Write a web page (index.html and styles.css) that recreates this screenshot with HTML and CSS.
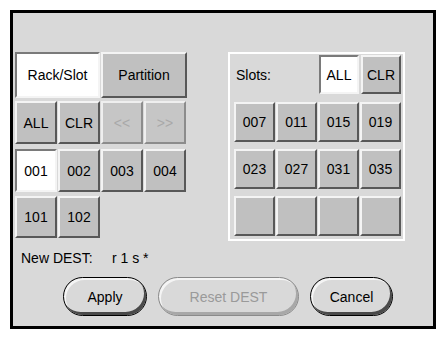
FILE: index.html
```html
<!DOCTYPE html>
<html lang="en">
<head>
	<meta charset="UTF-8">
	<title>Destination</title>
	<link rel="stylesheet" href="styles.css">
</head>
<body>
	<div class="frame">
		<div class="top">
			<div class="left">
				<div class="row row-tabs">
					<div class="btn on tab-rack">Rack/Slot</div>
					<div class="btn tab-part">Partition</div>
				</div>
				<div class="row row-ctl">
					<div class="btn sq">ALL</div>
					<div class="btn sq">CLR</div>
					<div class="btn sq off">&lt;&lt;</div>
					<div class="btn sq off">&gt;&gt;</div>
				</div>
				<div class="row row-rack">
					<div class="btn sq on">001</div>
					<div class="btn sq">002</div>
					<div class="btn sq">003</div>
					<div class="btn sq">004</div>
				</div>
				<div class="row row-rack2">
					<div class="btn sq">101</div>
					<div class="btn sq">102</div>
				</div>
			</div>

			<div class="slots">
				<div class="slots-head">
					<span class="slots-label">Slots:</span>
					<div class="btn small on">ALL</div>
					<div class="btn small">CLR</div>
				</div>
				<div class="slot-grid">
					<div class="btn slot">007</div>
					<div class="btn slot">011</div>
					<div class="btn slot">015</div>
					<div class="btn slot">019</div>
					<div class="btn slot">023</div>
					<div class="btn slot">027</div>
					<div class="btn slot">031</div>
					<div class="btn slot">035</div>
					<div class="btn slot"></div>
					<div class="btn slot"></div>
					<div class="btn slot"></div>
					<div class="btn slot"></div>
				</div>
			</div>
		</div>

		<div class="dest">
			<span class="dest-label">New DEST:</span>
			<span class="dest-value">r 1 s *</span>
		</div>

		<div class="actions">
			<div class="pill pill-apply">Apply</div>
			<div class="pill pill-reset disabled">Reset DEST</div>
			<div class="pill pill-cancel">Cancel</div>
		</div>
	</div>
</body>
</html>
```

FILE: styles.css
```css
* {
	margin: 0;
	padding: 0;
	box-sizing: border-box;
}

body {
	font-family: "Liberation Sans", Arial, sans-serif;
	font-size: 14px;
	line-height: 16px;
	color: #000;
	background: #fff;
}

.frame {
	margin: 10px;
	width: 426px;
	height: 319px;
	border: 3px solid #000;
	background: #d9d9d9;
}

.top {
	display: flex;
	align-items: flex-start;
	padding: 39px 0 0 2px;
}

/* left column */
.left {
	width: 172px;
}

.row {
	display: flex;
	gap: 1px;
}

.row-tabs {
	height: 46px;
}

.row-ctl {
	margin-top: 3px;
	height: 43px;
}

.row-rack {
	margin-top: 5px;
	height: 43px;
}

.row-rack2 {
	margin-top: 4px;
	height: 42px;
}

.btn {
	display: flex;
	align-items: center;
	justify-content: center;
	background: #c0c0c0;
	border: 2px solid;
	border-color: #f4f4f4 #585858 #585858 #f4f4f4;
}

.btn.on {
	background: #fff;
	border-color: #7a7a7a #f4f4f4 #f4f4f4 #7a7a7a;
}

.btn.off {
	color: #a9a9a9;
	background: #c6c6c6;
	border-color: #efefef #8c8c8c #8c8c8c #efefef;
}

.tab-rack {
	width: 85px;
}

.tab-part {
	width: 86px;
}

.sq {
	width: 42px;
}

/* slot panel */
.slots {
	margin-left: 41px;
	width: 177px;
	height: 189px;
	border: 2px solid #fff;
	padding: 1px 2px 4px 4px;
}

.slots-head {
	display: flex;
	align-items: center;
	height: 39px;
	gap: 2px;
}

.slots-label {
	margin-left: 2px;
	margin-right: auto;
}

.small {
	width: 40px;
	height: 39px;
}

.slot-grid {
	margin-top: 8px;
	display: grid;
	grid-template-columns: repeat(4, 41px);
	grid-auto-rows: 40px;
	column-gap: 1px;
	row-gap: 7px;
}

/* bottom */
.dest {
	display: flex;
	margin: 9px 0 0 8px;
	height: 16px;
}

.dest-label {
	width: 91px;
}

.actions {
	display: flex;
	gap: 11px;
	margin: 11px 0 0 50px;
}

.pill {
	display: flex;
	align-items: center;
	justify-content: center;
	height: 39px;
	border: 1px solid #000;
	border-radius: 20px;
	background: #d9d9d9;
	box-shadow: inset -2px -3px 0 #4a4a4a, inset 2px 2px 0 #f4f4f4;
}

.pill-apply {
	width: 84px;
}

.pill-reset {
	width: 141px;
}

.pill-cancel {
	width: 83px;
}

.pill.disabled {
	color: #9a9a9a;
	border-color: #8a8a8a;
	box-shadow: inset -2px -3px 0 #a8a8a8, inset 2px 2px 0 #f4f4f4;
}
```
